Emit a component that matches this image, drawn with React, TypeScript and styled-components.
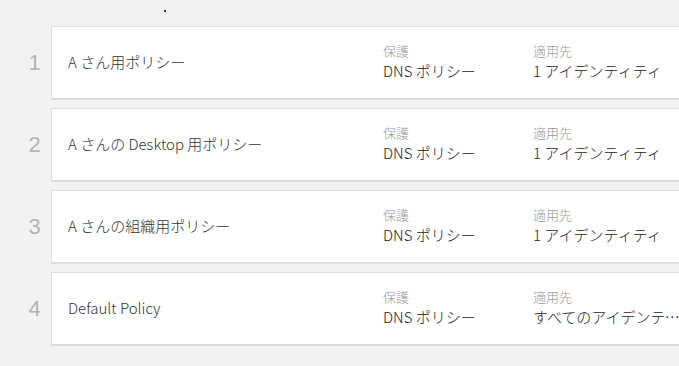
import * as React from "react";
import styled, { createGlobalStyle } from "styled-components";

const GlobalStyle = createGlobalStyle`
  html, body {
    margin: 0;
    padding: 0;
    background: #f2f2f2;
    font-family: "Noto Sans CJK JP", "Liberation Sans", sans-serif;
    overflow: hidden;
  }
`;

const Page = styled.div`
  width: 679px;
  height: 366px;
  box-sizing: border-box;
  padding-top: 10px;
  overflow: hidden;
`;

const Dot = styled.div`
  width: 2px;
  height: 2px;
  background: #333;
  margin-left: 164px;
  margin-bottom: 14px;
`;

const List = styled.div`
  display: flex;
  flex-direction: column;
  gap: 8px;
`;

const Row = styled.div`
  display: flex;
  align-items: stretch;
`;

const Index = styled.div`
  width: 51px;
  flex: none;
  display: flex;
  align-items: center;
  justify-content: center;
  padding-left: 18px;
  box-sizing: border-box;
  font-family: "Liberation Sans", sans-serif;
  font-size: 22px;
  font-weight: 300;
  color: #b3b3b3;
`;

const Card = styled.div`
  flex: 1;
  height: 74px;
  box-sizing: border-box;
  margin-right: -40px;
  display: grid;
  grid-template-columns: 315px 150px 1fr;
  align-items: center;
  background: #fff;
  border: 1px solid #e0e0e0;
  border-bottom: 2px solid #dcdcdc;
  padding-left: 16px;
  white-space: nowrap;
  font-weight: 300;
`;

const Title = styled.div`
  font-size: 15px;
  color: #333;
  padding-bottom: 2px;
`;

const Field = styled.div`
  display: flex;
  flex-direction: column;
  padding-bottom: 2px;
  overflow: hidden;
`;

const Label = styled.span`
  font-size: 13px;
  color: #999;
  line-height: 18px;
`;

const Value = styled.span<{ $clip?: boolean }>`
  font-size: 15px;
  color: #222;
  line-height: 22px;
  overflow: hidden;
  text-overflow: ellipsis;
  max-width: ${(p) => (p.$clip ? "150px" : "none")};
`;

type Policy = { name: string; target: string; clip?: boolean };

const policies: Policy[] = [
  { name: "A さん用ポリシー", target: "1 アイデンティティ" },
  { name: "A さんの Desktop 用ポリシー", target: "1 アイデンティティ" },
  { name: "A さんの組織用ポリシー", target: "1 アイデンティティ" },
  { name: "Default Policy", target: "すべてのアイデンティティ", clip: true },
];

const App: React.FC = () => {
  return (
    <Page>
      <GlobalStyle />
      <Dot />
      <List>
        {policies.map((policy, index) => (
          <Row key={index}>
            <Index>{index + 1}</Index>
            <Card>
              <Title>{policy.name}</Title>
              <Field>
                <Label>保護</Label>
                <Value>DNS ポリシー</Value>
              </Field>
              <Field>
                <Label>適用先</Label>
                <Value $clip={policy.clip}>{policy.target}</Value>
              </Field>
            </Card>
          </Row>
        ))}
      </List>
    </Page>
  );
};

export default App;
